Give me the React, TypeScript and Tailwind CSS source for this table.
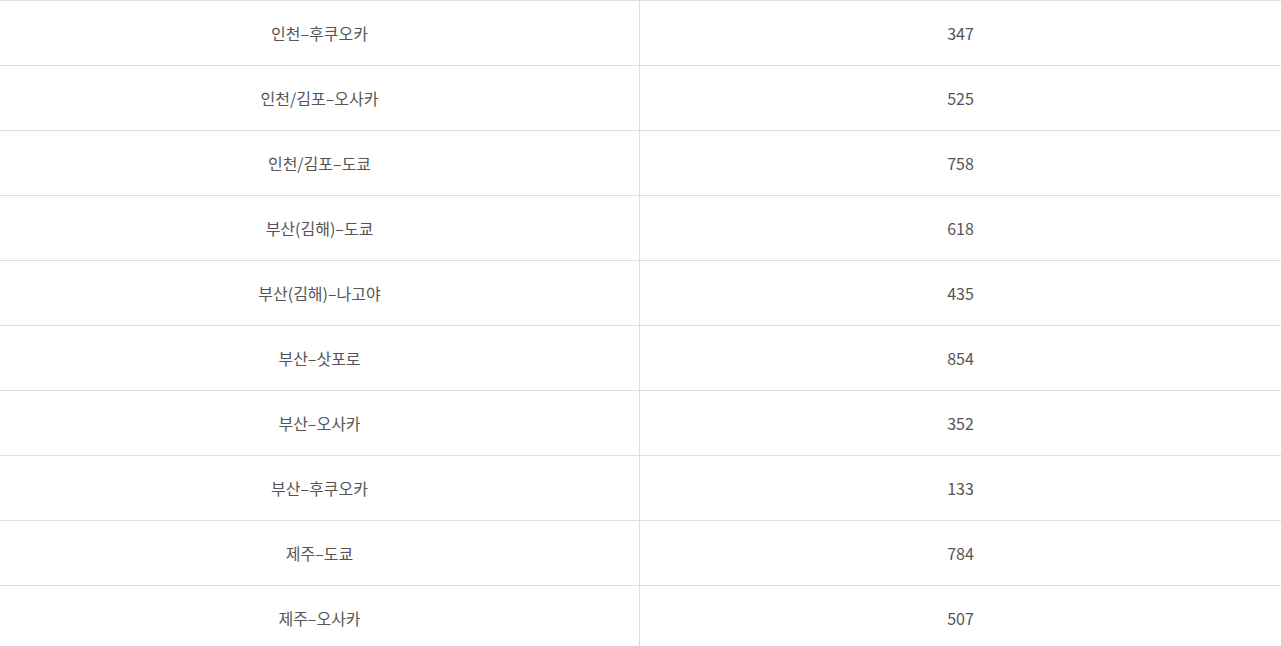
import React from 'react';

const rows: [string, string][] = [
    ['인천–후쿠오카', '347'],
    ['인천/김포–오사카', '525'],
    ['인천/김포–도쿄', '758'],
    ['부산(김해)–도쿄', '618'],
    ['부산(김해)–나고야', '435'],
    ['부산–삿포로', '854'],
    ['부산–오사카', '352'],
    ['부산–후쿠오카', '133'],
    ['제주–도쿄', '784'],
    ['제주–오사카', '507'],
];

export default function App() {
    return (
        <div className="bg-white w-full" style={{ fontFamily: '"Noto Sans CJK KR", "Noto Sans", sans-serif' }}>
            {rows.map(([route, count]) => (
                <div key={route} className="grid grid-cols-[640px_1fr] h-[65px] border-t border-[#dddddd] text-[16px] text-[#555555]">
                    <div className="flex items-center justify-center border-r border-[#dddddd]">{route}</div>
                    <div className="flex items-center justify-center">{count}</div>
                </div>
            ))}
        </div>
    );
}
